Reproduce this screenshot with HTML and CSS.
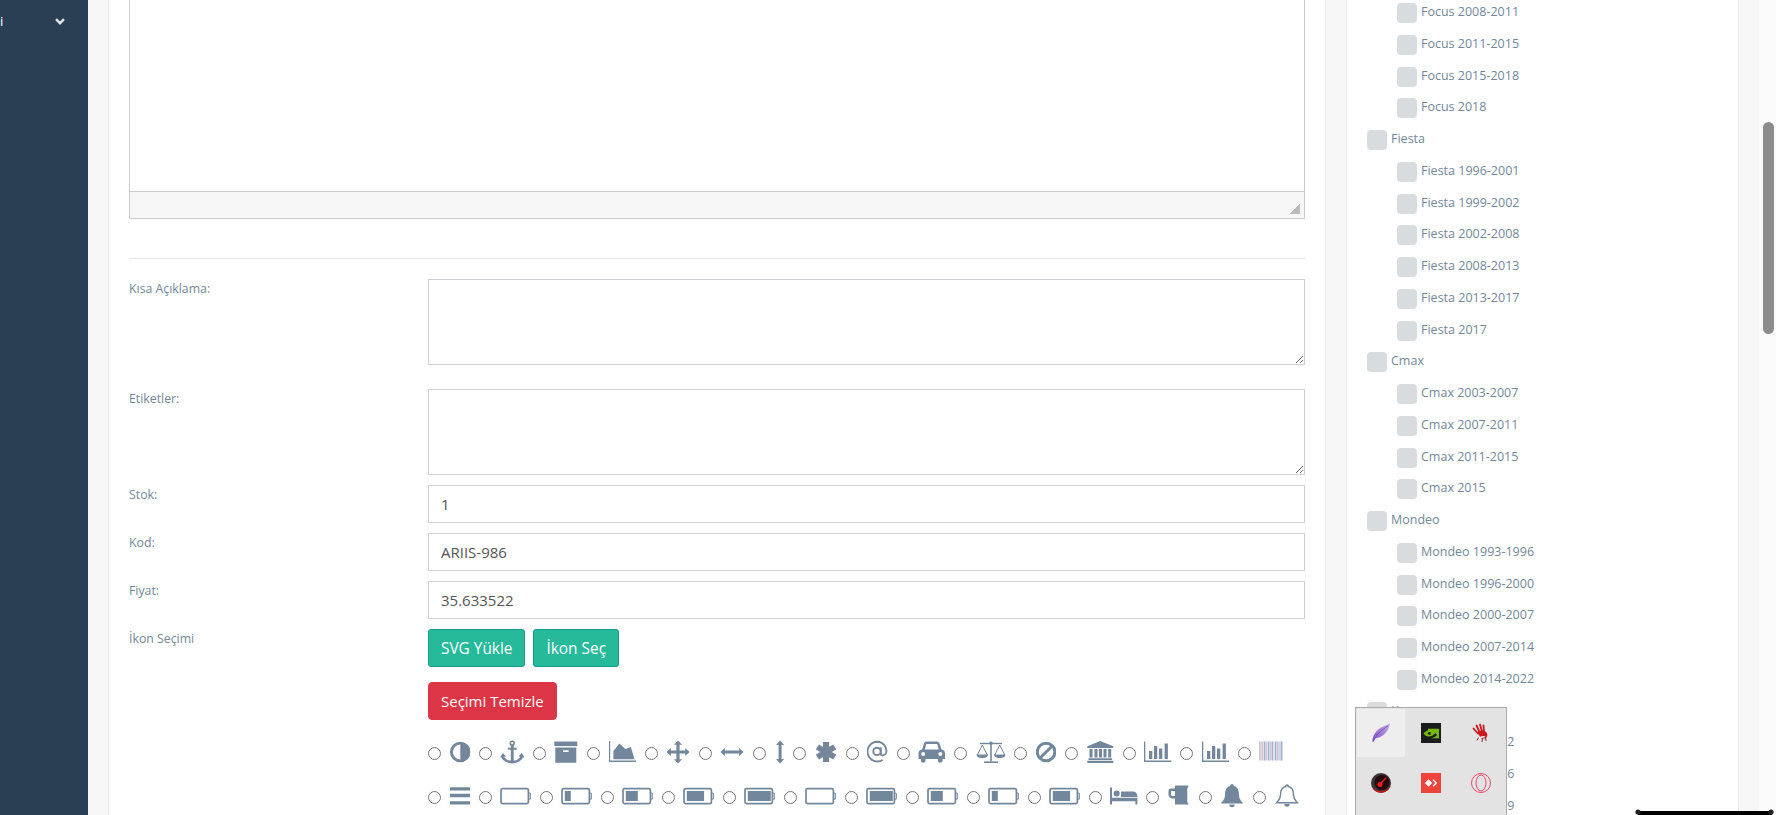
FILE: index.html
```html
<!DOCTYPE html>
<html lang="tr">

<head>
    <meta charset="UTF-8">
    <title>Ürün Düzenle</title>
    <link rel="stylesheet" href="styles.css">
</head>

<body>
    <svg class="icon-defs" width="0" height="0">
        <symbol id="battery-frame" viewBox="0 0 30.86 24">
            <rect x="1" y="4.6" width="27.4" height="15" rx="1.5" fill="none" stroke="currentColor" stroke-width="1.7"/>
            <path d="M28.4 9h1a1 1 0 0 1 1 1v4.2a1 1 0 0 1-1 1h-1" fill="none" stroke="currentColor" stroke-width="1.2"/>
        </symbol>
    </svg>

    <aside class="sidebar">
        <div class="side-item">
            <span>i</span>
            <svg class="side-chevron" width="10" height="7" viewBox="0 0 10 7"><path d="M1 1.2l4 4 4-4" fill="none" stroke="#dfe3e7" stroke-width="2.4"/></svg>
        </div>
    </aside>

    <main class="content">
        <section class="panel panel-form">
            <div class="editor">
                <div class="editor-body"></div>
                <div class="editor-status"><span class="editor-grip"></span></div>
            </div>
            <hr class="divider">

            <div class="form-row row-first">
                <label>Kısa Açıklama:</label>
                <div class="field"><textarea></textarea></div>
            </div>
            <div class="form-row row-wide">
                <label>Etiketler:</label>
                <div class="field"><textarea></textarea></div>
            </div>
            <div class="form-row">
                <label>Stok:</label>
                <div class="field"><input type="text" value="1"></div>
            </div>
            <div class="form-row">
                <label>Kod:</label>
                <div class="field"><input type="text" value="ARIIS-986"></div>
            </div>
            <div class="form-row">
                <label>Fiyat:</label>
                <div class="field"><input type="text" value="35.633522"></div>
            </div>
            <div class="form-row">
                <label>İkon Seçimi</label>
                <div class="field">
                    <div class="btn-row">
                        <button class="btn btn-green">SVG Yükle</button>
                        <button class="btn btn-green">İkon Seç</button>
                    </div>
                    <button class="btn btn-red">Seçimi Temizle</button>

                    <div class="icon-list">
                        <label class="icon-option"><input type="radio" name="icon">
                            <svg width="20.57" height="24" viewBox="0 0 20.57 24"><path fill-rule="evenodd" d="M10.3 1.7a10.3 10.3 0 1 0 0 20.6a10.3 10.3 0 0 0 0-20.6zM10.3 4.6a7.4 7.4 0 0 0 0 14.8z"/></svg>
                        </label>
                        <label class="icon-option"><input type="radio" name="icon">
                            <svg width="24" height="24" viewBox="0 0 24 24"><circle cx="12.2" cy="3.2" r="1.9" fill="none" stroke="currentColor" stroke-width="1.6"/><rect x="10.8" y="5" width="2.9" height="16"/><rect x="7.8" y="7.7" width="8.9" height="2"/><path d="M2.3 15.5c.4 3.8 5 6.6 9.9 6.6s9.5-2.8 9.9-6.6" fill="none" stroke="currentColor" stroke-width="2.6"/><path d="M0 17.5l3-4.5 3 3.5zM24.6 17.5l-3-4.5-3 3.5z"/></svg>
                        </label>
                        <label class="icon-option"><input type="radio" name="icon">
                            <svg width="24" height="24" viewBox="0 0 24 24"><rect x="0.3" y="1.5" width="23" height="4.6"/><path fill-rule="evenodd" d="M1.3 7.5h21v15.2h-21zM9 10.3v1.6h5.6v-1.6z"/></svg>
                        </label>
                        <label class="icon-option"><input type="radio" name="icon">
                            <svg width="27.43" height="24" viewBox="0 0 27.43 24"><path d="M0 1h1.2v19.6h26.2v1.4H0z"/><path d="M4.4 19.3V11l6-7.5 6 5.5 5.5-2 3.6 12.3z"/></svg>
                        </label>
                        <label class="icon-option"><input type="radio" name="icon">
                            <svg width="24" height="24" viewBox="0 0 24 24"><path d="M12 .4l4 4.4h-2.4v5.6h5.6V8l4.4 4-4.4 4v-2.4h-5.6v5.6H16l-4 4.4-4-4.4h2.4v-5.6H4.8V16L.4 12l4.4-4v2.4h5.6V4.800H8z"/></svg>
                        </label>
                        <label class="icon-option"><input type="radio" name="icon">
                            <svg width="24" height="24" viewBox="0 0 24 24"><path d="M.4 12l4.4-4v2.500h14.400V8l4.400 4-4.400 4v-2.500H4.800V16z"/></svg>
                        </label>
                        <label class="icon-option"><input type="radio" name="icon">
                            <svg width="10.29" height="24" viewBox="0 0 10.29 24"><path d="M5.100.5l4 4.500H6.600v14h2.500l-4 4.500-4-4.500h2.500V5H1.100z"/></svg>
                        </label>
                        <label class="icon-option"><input type="radio" name="icon">
                            <svg width="22.29" height="24" viewBox="0 0 22.29 24"><g fill="none" stroke="currentColor" stroke-width="6"><path d="M11 2v20"/><path d="M2.300 7l17.400 10"/><path d="M19.700 7L2.300 17"/></g></svg>
                        </label>
                        <label class="icon-option"><input type="radio" name="icon">
                            <svg width="20.57" height="24" viewBox="0 0 20.57 24"><g fill="none" stroke="currentColor" stroke-width="1.9"><circle cx="10" cy="11.4" r="3.7"/><path d="M13.800 7.200v6.600c0 2.200 4.100 2.400 5.300-.8C20.700 7.300 15.800 1.700 10.200 1.700A9.900 9.900 0 1 0 15.700 20"/></g></svg>
                        </label>
                        <label class="icon-option"><input type="radio" name="icon">
                            <svg width="27.43" height="24" viewBox="0 0 27.43 24"><path fill-rule="evenodd" d="M6 3.500Q6.500 1.500 9 1.500H18.500Q21 1.500 21.500 3.500L23.500 9.500Q27 10.500 27 13V19H24.500V21Q24.500 22.500 23 22.500H21.500Q20 22.500 20 21V19H7.500V21Q7.500 22.500 6 22.500H4.500Q3 22.500 3 21V19H.5V13Q.5 10.500 4 9.500ZM8.300 4L6.800 9.500H20.700L19.200 4ZM5.200 12a2 2 0 1 0 0 4a2 2 0 0 0 0-4ZM22.300 12a2 2 0 1 0 0 4a2 2 0 0 0 0-4Z"/></svg>
                        </label>
                        <label class="icon-option"><input type="radio" name="icon">
                            <svg width="30" height="24" viewBox="0 0 30 24"><rect x="14.200" y="3" width="1.600" height="18.500"/><rect x="4" y="2.800" width="22" height="1.400"/><circle cx="15" cy="3.200" r="1.800"/><rect x="8" y="21.400" width="14" height="1.600"/><path d="M.5 14.500h11.500c0 2.400-2.500 3.500-5.700 3.500S.5 16.900.5 14.500zM18 14.500h11.500c0 2.400-2.500 3.500-5.700 3.500S18 16.900 18 14.500z"/><path d="M1.300 15L6.300 5l5 10M18.700 15l5-10 5 10" fill="none" stroke="currentColor"/></svg>
                        </label>
                        <label class="icon-option"><input type="radio" name="icon">
                            <svg width="20.57" height="24" viewBox="0 0 20.57 24"><circle cx="10.100" cy="12" r="8.800" fill="none" stroke="currentColor" stroke-width="3"/><path d="M4 18L16.200 6" fill="none" stroke="currentColor" stroke-width="3"/></svg>
                        </label>
                        <label class="icon-option"><input type="radio" name="icon">
                            <svg width="27.43" height="24" viewBox="0 0 27.43 24"><path d="M13.300 1L26.300 6.300V8H.3V6.300z"/><path d="M2.500 9h3v8.500h-3zM7.500 9h3v8.500h-3zM12 9h3v8.500h-3zM16.500 9h3v8.500h-3zM21.200 9h3v8.500h-3z"/><path d="M1.500 18.300h23.600v1.700H1.500zM.3 20.800h26v2.200H.3z"/></svg>
                        </label>
                        <label class="icon-option"><input type="radio" name="icon">
                            <svg width="27.43" height="24" viewBox="0 0 27.43 24"><path d="M0 1.500h1.300v19h26.100V22H0z"/><path d="M5 11h3.300v8H5zM10 6h3.300v13H10zM15 8.500h3.300V19H15zM20.600 3.500h3.300V19h-3.300z"/></svg>
                        </label>
                        <label class="icon-option"><input type="radio" name="icon">
                            <svg width="27.43" height="24" viewBox="0 0 27.43 24"><path d="M0 1.500h1.300v19h26.100V22H0z"/><path d="M5 11h3.300v8H5zM10 6h3.300v13H10zM15 8.500h3.300V19H15zM20.600 3.500h3.300V19h-3.300z"/></svg>
                        </label>
                        <label class="icon-option"><input type="radio" name="icon">
                            <svg width="24" height="24" viewBox="0 0 24 24"><path class="bar-pink" d="M0 1.500h1v19H0zM3 1.500h1.500v19H3zM7 1.500h1.500v19H7zM11 1.500h1v19h-1zM14.500 1.500h1v19h-1zM18 1.500h1v19h-1z"/><path class="bar-blue" d="M1.500 1.500h1v19h-1zM5 1.500h1.500v19H5zM9 1.500h1.500v19H9zM12.500 1.500h1.500v19h-1.500zM16 1.500h1.500v19H16zM19.500 1.500h1v19h-1zM21.500 1.500h2v19h-2z"/></svg>
                        </label>

                        <label class="icon-option"><input type="radio" name="icon">
                            <svg width="20.57" height="24" viewBox="0 0 20.57 24"><path d="M0 3.200h20.600v3.300H0zM0 9.800h20.600v3.400H0zM0 17.200h20.600v3.300H0z"/></svg>
                        </label>
                        <label class="icon-option"><input type="radio" name="icon">
                            <svg width="30.86" height="24" viewBox="0 0 30.86 24"><use href="#battery-frame"/></svg>
                        </label>
                        <label class="icon-option"><input type="radio" name="icon">
                            <svg width="30.86" height="24" viewBox="0 0 30.86 24"><use href="#battery-frame"/><rect x="3.800" y="7" width="6" height="10"/></svg>
                        </label>
                        <label class="icon-option"><input type="radio" name="icon">
                            <svg width="30.86" height="24" viewBox="0 0 30.86 24"><use href="#battery-frame"/><rect x="3.800" y="7" width="12" height="10"/></svg>
                        </label>
                        <label class="icon-option"><input type="radio" name="icon">
                            <svg width="30.86" height="24" viewBox="0 0 30.86 24"><use href="#battery-frame"/><rect x="3.800" y="7" width="17.300" height="10"/></svg>
                        </label>
                        <label class="icon-option"><input type="radio" name="icon">
                            <svg width="30.86" height="24" viewBox="0 0 30.86 24"><use href="#battery-frame"/><rect x="3.800" y="7" width="23" height="10"/></svg>
                        </label>
                        <label class="icon-option"><input type="radio" name="icon">
                            <svg width="30.86" height="24" viewBox="0 0 30.86 24"><use href="#battery-frame"/></svg>
                        </label>
                        <label class="icon-option"><input type="radio" name="icon">
                            <svg width="30.86" height="24" viewBox="0 0 30.86 24"><use href="#battery-frame"/><rect x="3.800" y="7" width="23" height="10"/></svg>
                        </label>
                        <label class="icon-option"><input type="radio" name="icon">
                            <svg width="30.86" height="24" viewBox="0 0 30.86 24"><use href="#battery-frame"/><rect x="3.800" y="7" width="12" height="10"/></svg>
                        </label>
                        <label class="icon-option"><input type="radio" name="icon">
                            <svg width="30.86" height="24" viewBox="0 0 30.86 24"><use href="#battery-frame"/><rect x="3.800" y="7" width="6" height="10"/></svg>
                        </label>
                        <label class="icon-option"><input type="radio" name="icon">
                            <svg width="30.86" height="24" viewBox="0 0 30.86 24"><use href="#battery-frame"/><rect x="3.800" y="7" width="17.300" height="10"/></svg>
                        </label>
                        <label class="icon-option"><input type="radio" name="icon">
                            <svg width="27.43" height="24" viewBox="0 0 27.43 24"><path d="M0 3.500h2v10.300h25.400v6.700h-2v-3.300H2v3.300H0z"/><circle cx="6.700" cy="9.600" r="3"/><path d="M11 7.500h11.800a4.500 4.500 0 0 1 4.600 4.500v1H11z"/></svg>
                        </label>
                        <label class="icon-option"><input type="radio" name="icon">
                            <svg width="22.29" height="24" viewBox="0 0 22.29 24"><path fill-rule="evenodd" d="M7 1.500h13.300V3l-1 1v14.500l1 .5v1.500H7v-6H4.500Q1 14.500.5 11V6.500q0-2 2.500-2h4zM3 7v3.500Q3 12 4.300 12H7V7z"/></svg>
                        </label>
                        <label class="icon-option"><input type="radio" name="icon">
                            <svg width="24" height="24" viewBox="0 0 24 24"><path d="M12 0a1.800 1.800 0 0 1 1.800 1.900C18 2.700 19 7 19 11c0 4 2 6 4.500 8.500H.5C3 17 5 15 5 11c0-4 1-8.300 5.200-9.100A1.800 1.800 0 0 1 12 0z"/><path d="M9.300 20.500a2.700 2.700 0 0 0 5.400 0z"/></svg>
                        </label>
                        <label class="icon-option"><input type="radio" name="icon">
                            <svg width="24" height="24" viewBox="0 0 24 24"><path d="M12 1a1.200 1.200 0 0 1 1.200 1.600C17.500 3.200 18.500 7.500 18.500 11c0 4 2 5.800 3.800 7.800H1.700C3.500 16.800 5.500 15 5.500 11c0-3.500 1-7.800 5.300-8.400A1.200 1.200 0 0 1 12 1z" fill="none" stroke="currentColor" stroke-width="1.5"/><path d="M9.300 20a2.700 2.700 0 0 0 5.400 0z"/></svg>
                        </label>
                    </div>
                </div>
            </div>
        </section>

        <section class="panel panel-tree">
            <ul class="tree">
                <li class="child"><span class="check"></span>Focus 2008-2011</li>
                <li class="child"><span class="check"></span>Focus 2011-2015</li>
                <li class="child"><span class="check"></span>Focus 2015-2018</li>
                <li class="child"><span class="check"></span>Focus 2018</li>
                <li><span class="check"></span>Fiesta</li>
                <li class="child"><span class="check"></span>Fiesta 1996-2001</li>
                <li class="child"><span class="check"></span>Fiesta 1999-2002</li>
                <li class="child"><span class="check"></span>Fiesta 2002-2008</li>
                <li class="child"><span class="check"></span>Fiesta 2008-2013</li>
                <li class="child"><span class="check"></span>Fiesta 2013-2017</li>
                <li class="child"><span class="check"></span>Fiesta 2017</li>
                <li><span class="check"></span>Cmax</li>
                <li class="child"><span class="check"></span>Cmax 2003-2007</li>
                <li class="child"><span class="check"></span>Cmax 2007-2011</li>
                <li class="child"><span class="check"></span>Cmax 2011-2015</li>
                <li class="child"><span class="check"></span>Cmax 2015</li>
                <li><span class="check"></span>Mondeo</li>
                <li class="child"><span class="check"></span>Mondeo 1993-1996</li>
                <li class="child"><span class="check"></span>Mondeo 1996-2000</li>
                <li class="child"><span class="check"></span>Mondeo 2000-2007</li>
                <li class="child"><span class="check"></span>Mondeo 2007-2014</li>
                <li class="child"><span class="check"></span>Mondeo 2014-2022</li>
                <li><span class="check"></span>Kuga</li>
                <li class="child"><span class="check"></span>Kuga 2008-2012</li>
                <li class="child"><span class="check"></span>Kuga 2012-2016</li>
                <li class="child"><span class="check"></span>Kuga 2016-2019</li>
            </ul>
        </section>
    </main>

    <div class="scrollbar"><div class="scrollbar-thumb"></div></div>

    <!-- tray popup that was open over the page -->
    <div class="tray">
        <div class="tray-cell tray-hover">
            <svg width="20" height="20" viewBox="0 0 20 20"><defs><linearGradient id="feather" x1="0" y1="1" x2="1" y2="0"><stop offset="0" stop-color="#7c4fc4"/><stop offset="1" stop-color="#c8b2e6"/></linearGradient></defs><path d="M1.500 19C1 13 5 7 11 4c3-1.500 6-2.500 8-3.500-.5 4-2.500 8-5.500 10.500C10 14 6.500 15 4 15.500L2.400 19z" fill="url(#feather)"/><path d="M2.500 18C5 12 10 7 17 3" fill="none" stroke="#6a3fb5" stroke-width=".8"/></svg>
        </div>
        <div class="tray-cell">
            <svg width="20" height="20" viewBox="0 0 20 20"><rect width="20" height="20" fill="#1b1d1c"/><path d="M7 5.800h11v9.400H10c2.500-.5 5-1.800 6-3.200-1.500-2.500-5-4.400-9-3.600z" fill="#76b900"/><path d="M2.500 10.500C4.500 7.800 7.500 6.700 10 7c2 .2 3.500 1.500 4.500 3-1.500 2-5 4-7.500 3.500-2-.3-3.500-1.500-4.500-3zM6.500 10.500c.5 1 2 1.500 3.500 1-1-1-.5-2.300 0-2.500-1.800-.3-3.300.5-3.500 1.500z" fill="#76b900" fill-rule="evenodd"/></svg>
        </div>
        <div class="tray-cell">
            <svg width="20" height="20" viewBox="0 0 20 20"><g fill="none" stroke="#c9191e" stroke-width="1.800" stroke-linecap="round"><path d="M2.500 5.500l4.500 5"/><path d="M5.500 2.500l3 6.500"/><path d="M9 1.500l2 7"/><path d="M12.500 2.500l.5 6.500"/></g><path d="M6.500 9c2-1.500 6-2.500 8-.5 2 1.500 2.500 4 1 6-1.500 1-4 1.500-6 .5-1-2-2-4-3-6z" fill="#c9191e"/><path d="M5 15l7-2 3 1-7 1.500z" fill="#fff"/><path d="M6 17.500l1.500-3M11 19l.5-4M15 18l-.5-4" stroke="#8e2326" stroke-width="1"/></svg>
        </div>
        <div class="tray-cell">
            <svg width="20" height="20" viewBox="0 0 20 20"><circle cx="10" cy="10" r="10" fill="#3a3436"/><path d="M1.500 14a10 10 0 0 0 17 0l.9-.9A10 10 0 0 1 1 14z" fill="#e81010"/><circle cx="11" cy="9.500" r="7.500" fill="#26090c"/><path d="M15 5l-5 5" stroke="#ee1c1c" stroke-width="1.500"/><circle cx="9" cy="11.500" r="2.500" fill="#ee1c1c"/><path d="M3 15.500A9.500 9.500 0 0 0 17 15.500 8.500 8.500 0 0 1 3 15.500z" fill="#ff0f0f"/></svg>
        </div>
        <div class="tray-cell">
            <svg width="20" height="20" viewBox="0 0 20 20"><rect width="20" height="20" fill="#ef443b"/><path d="M7.500 6.300L11.200 10l-3.700 3.700L3.800 10z" fill="#fff"/><path d="M12.500 6.300L16.200 10l-3.700 3.700-1-1L14.200 10l-2.700-2.700z" fill="#fff"/></svg>
        </div>
        <div class="tray-cell">
            <svg width="20" height="20" viewBox="0 0 20 20"><circle cx="10" cy="10" r="9.500" fill="none" stroke="#f0466c" stroke-width="1"/><ellipse cx="10" cy="10" rx="5" ry="8" fill="none" stroke="#f0466c" stroke-width="1"/></svg>
        </div>
    </div>

    <!-- dark edge at the bottom of the shot -->
    <svg class="bottom-edge" width="144" height="9" viewBox="0 0 144 9">
        <rect x="5" y="5" width="134" height="4" fill="#000"/>
        <circle cx="5" cy="6" r="2.600" fill="#222"/>
        <circle cx="138" cy="6" r="2.600" fill="#222"/>
    </svg>
</body>

</html>
```

FILE: styles.css
```css
* {
    box-sizing: border-box;
}

html,
body {
    height: 815px;
}

body {
    display: flex;
    margin: 0;
    overflow: hidden;
    background-color: #f7f7f7;
    color: #73879c;
    font-family: "Open Sans", sans-serif;
    font-size: 12px;
}

.icon-defs {
    position: absolute;
}

/* Sidebar */
.sidebar {
    flex: 0 0 88px;
    background-color: #2a3f54;
    color: #fff;
    font-size: 13px;
}

.side-item {
    display: flex;
    justify-content: space-between;
    align-items: center;
    height: 20px;
    margin-top: 11px;
    padding-right: 23px;
    line-height: 20px;
}

/* Main columns */
.content {
    display: flex;
    flex: 1;
    gap: 20px;
    min-width: 0;
    padding: 0 20px;
}

.panel {
    height: 815px;
    overflow: hidden;
    background-color: #fff;
    border-left: 1px solid #e6e9ed;
    border-right: 1px solid #e6e9ed;
}

.panel-form {
    flex: 0 0 1218px;
    padding: 0 20px;
}

.panel-tree {
    flex: 0 0 393px;
}

/* Editor */
.editor {
    height: 219px;
    border: 1px solid #ccc;
    border-top: none;
}

.editor-body {
    height: 191px;
}

.editor-status {
    display: flex;
    justify-content: flex-end;
    align-items: flex-end;
    height: 27px;
    padding: 0 4px 4px 0;
    background-color: #f7f7f7;
    border-top: 1px solid #ccc;
}

.editor-grip {
    width: 10px;
    height: 10px;
    background: linear-gradient(135deg, transparent 50%, #bbb 50%);
}

.divider {
    height: 1px;
    margin: 39px 0 0;
    background-color: #e5e5e5;
    border: none;
}

/* Form rows */
.form-row {
    display: flex;
    margin-top: 10px;
}

.row-first {
    margin-top: 20px;
}

.row-wide {
    margin-top: 24px;
}

.form-row > label {
    flex: 0 0 299px;
    padding-top: 1px;
    font-size: 12.3px;
    line-height: 18px;
}

.field {
    flex: 1;
    min-width: 0;
}

.field textarea {
    display: block;
    width: 100%;
    height: 86px;
    border: 1px solid #cdd0d8;
    outline: none;
}

.field input[type="text"] {
    display: block;
    width: 100%;
    height: 38px;
    padding: 0 12px;
    color: #555;
    font-family: "Open Sans", sans-serif;
    font-size: 15px;
    border: 1px solid #cdd0d8;
    outline: none;
}

.btn {
    height: 38px;
    padding: 0 12px;
    color: #fff;
    font-family: "Open Sans", sans-serif;
    font-size: 15px;
    border-radius: 3px;
    cursor: pointer;
}

.btn-row {
    display: flex;
    gap: 8px;
    margin-bottom: 15px;
}

.btn-green {
    background-color: #26b99a;
    border: 1px solid #169f85;
    font-size: 15.4px;
}

.btn-red {
    display: block;
    background-color: #dc3545;
    border: 1px solid #dc3545;
    border-radius: 4px;
}

/* Icon picker */
.icon-list {
    display: flex;
    flex-wrap: wrap;
    gap: 20px 8.58px;
    margin-top: 20px;
    color: #73879c;
}

.icon-option {
    display: flex;
    align-items: center;
    gap: 8.58px;
}

.icon-option input {
    flex: none;
    width: 13px;
    height: 13px;
    margin: 3px 0 0;
}

.icon-option svg {
    flex: none;
    fill: currentColor;
}

.bar-pink {
    fill: #dcc0cf;
}

.bar-blue {
    fill: #9db2cf;
}

/* Category tree */
.tree {
    margin: 0;
    padding: 3px 0 0 20px;
    list-style: none;
}

.tree li {
    display: flex;
    gap: 4px;
    height: 20px;
    margin-bottom: 11.75px;
    font-size: 12.5px;
    line-height: 17px;
}

.tree .child {
    margin-left: 30px;
}

.check {
    flex: none;
    width: 20px;
    height: 20px;
    background-color: #d8dcdf;
    border-radius: 4px;
}

/* Page scrollbar */
.scrollbar {
    flex: 0 0 17px;
    padding: 122px 2px 0 4px;
    background-color: #fbfbfb;
}

.scrollbar-thumb {
    height: 212px;
    background-color: #8c8c8c;
    border-radius: 6px;
}

/* Tray popup */
.tray {
    position: absolute;
    top: 707px;
    left: 1355px;
    display: grid;
    grid-template-columns: repeat(3, 48px);
    grid-auto-rows: 48px;
    gap: 2px;
    width: 152px;
    height: 108px;
    padding: 1px;
    overflow: hidden;
    background-color: #e3e3e3;
    border: 1px solid #aaa;
    border-bottom: none;
}

.tray-cell {
    display: flex;
    justify-content: center;
    align-items: center;
}

.tray-hover {
    background-color: #eee;
}

.bottom-edge {
    position: absolute;
    top: 806px;
    left: 1633px;
}
```
